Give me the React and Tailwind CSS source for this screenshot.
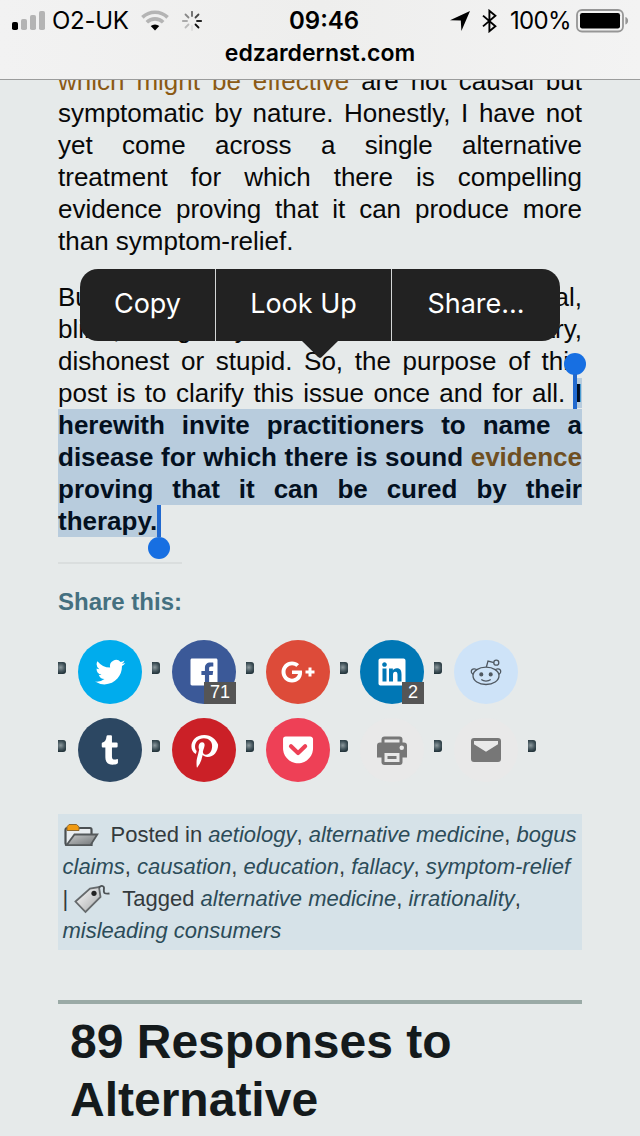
const shareRows = [
  [
    { name: "twitter", color: "bg-[#00aced]" },
    { name: "facebook", color: "bg-[#3b5998]", count: 71 },
    { name: "google", color: "bg-[#dd4b39]" },
    { name: "linkedin", color: "bg-[#0077b5]", count: 2 },
    { name: "reddit", color: "bg-[#cee3f8]" },
  ],
  [
    { name: "tumblr", color: "bg-[#2c4762]" },
    { name: "pinterest", color: "bg-[#cb2027]" },
    { name: "pocket", color: "bg-[#ee4056]" },
    { name: "print", color: "bg-[#e9e9e9]", grey: true },
    { name: "mail", color: "bg-[#e9e9e9]", grey: true },
  ],
];

const paths = {
  twitter:
    "M22.23 5.924a8.212 8.212 0 01-2.357.646 4.115 4.115 0 001.804-2.27 8.221 8.221 0 01-2.606.996 4.103 4.103 0 00-6.991 3.742 11.647 11.647 0 01-8.457-4.287 4.087 4.087 0 00-.556 2.063 4.1 4.1 0 001.825 3.415 4.09 4.09 0 01-1.859-.513v.052a4.104 4.104 0 003.292 4.023 4.099 4.099 0 01-1.853.07 4.11 4.11 0 003.833 2.85A8.236 8.236 0 012 18.411a11.616 11.616 0 006.29 1.843c7.547 0 11.675-6.252 11.675-11.675 0-.178-.004-.355-.012-.531a8.298 8.298 0 002.277-2.124z",
  facebook:
    "M20.007 3H3.993C3.445 3 3 3.445 3 3.993v16.013c0 .55.445.994.993.994h8.62v-6.97H10.27V11.31h2.346V9.31c0-2.325 1.42-3.59 3.494-3.59.993 0 1.847.073 2.096.106v2.43h-1.438c-1.128 0-1.346.537-1.346 1.324v1.734h2.69l-.35 2.717h-2.34V21h4.587c.548 0 .993-.445.993-.993V3.993c0-.548-.445-.993-.993-.993z",
  google:
    "M8 11h6.61c.06.35.11.7.11 1.16 0 4-2.68 6.84-6.72 6.84-3.87 0-7-3.13-7-7s3.13-7 7-7c1.89 0 3.47.69 4.69 1.83l-1.9 1.83C10.27 8.16 9.36 7.58 8 7.58c-2.39 0-4.34 1.98-4.34 4.42S5.61 16.42 8 16.42c2.77 0 3.81-1.99 3.97-3.02H8V11zm15 0h-2V9h-2v2h-2v2h2v2h2v-2h2z",
  linkedin:
    "M19.7 3H4.3C3.582 3 3 3.582 3 4.3v15.4c0 .718.582 1.3 1.3 1.3h15.4c.718 0 1.3-.582 1.3-1.3V4.3c0-.718-.582-1.3-1.3-1.3zM8.34 18.338H5.666v-8.59H8.34v8.59zM7.003 8.574c-.857 0-1.55-.694-1.55-1.548 0-.855.692-1.548 1.55-1.548.854 0 1.547.694 1.547 1.548 0 .855-.692 1.548-1.546 1.548zm11.335 9.764h-2.67V14.16c0-.996-.017-2.277-1.387-2.277-1.39 0-1.6 1.086-1.6 2.206v4.248h-2.668v-8.59h2.56v1.174h.036c.357-.675 1.228-1.387 2.527-1.387 2.703 0 3.203 1.78 3.203 4.092v4.71z",
  tumblr:
    "M16.7 18c-.4.3-.9.4-1.4.4-1.4 0-2-.6-2-1.900V10.300h3q.8 0 .8-.8V7.700q0-.7-.8-.7h-3V2.800q0-.7-.7-.7h-2.100q-.7 0-.8.700c-.3 2.500-.9 3.700-2.600 4.200-.4.100-.6.300-.6.700v1.800q0 .8.7.8h1.700v6.600c0 3.200 1.700 4.900 4.900 4.900 1.100 0 2.200-.2 3-.6.3-.2.5-.4.5-.7V18.500q0-.7-.6-.5z",
  pinterest:
    "M12.29 2C6.617 2 3.607 5.648 3.607 9.622c0 1.846 1.025 4.146 2.665 4.878.25.11.38.063.44-.17.044-.174.266-1.028.365-1.427.032-.128.017-.237-.09-.362-.543-.634-.974-1.79-.974-2.873 0-2.777 2.19-5.466 5.922-5.466 3.22 0 5.476 2.113 5.476 5.133 0 3.413-1.797 5.777-4.138 5.777-1.292 0-2.26-1.026-1.95-2.285.372-1.5 1.09-3.117 1.09-4.2 0-.968-.54-1.775-1.658-1.775-1.316 0-2.37 1.307-2.37 3.057 0 1.115.394 1.87.394 1.87s-1.302 5.304-1.54 6.29c-.47 1.954-.07 5.12-.037 5.44.02.19.262.24.37.09.153-.2 2.14-3.02 2.697-5.04.158-.57.904-3.4.904-3.4.447.82 1.75 1.54 3.14 1.54 4.13 0 7.09-3.63 7.09-8.14C20.39 5.21 16.7 2 12.29 2z",
  pocket:
    "M21.927 4.194A1.82 1.82 0 0020.222 3H3.839a1.823 1.823 0 00-1.813 1.814v6.035l.069 1.2c.29 2.73 1.707 5.115 3.899 6.778l.119.089.025.018a9.897 9.897 0 003.91 1.727 10.06 10.06 0 004.049-.014.255.255 0 00.064-.023 9.906 9.906 0 003.753-1.691l.025-.018.119-.089c2.192-1.664 3.609-4.049 3.898-6.778l.069-1.2V4.814a1.792 1.792 0 00-.098-.62zm-4.235 6.287l-4.704 4.512a1.371 1.371 0 01-1.898 0l-4.705-4.512a1.371 1.371 0 111.898-1.979l3.756 3.601 3.755-3.601a1.372 1.372 0 011.957.021 1.372 1.372 0 01-.059 1.958z",
  print:
    "M9 16h6v2H9v-2zm13 1h-3v3a2 2 0 01-2 2H7a2 2 0 01-2-2v-3H2V9a2 2 0 012-2h1V5a2 2 0 012-2h10a2 2 0 012 2v2h1a2 2 0 012 2v8zM7 7h10V5H7v2zm10 7H7v6h10v-6zm3-3.5a1.5 1.5 0 10-3.001.001A1.5 1.5 0 0020 10.5z",
  mail:
    "M20 4H4a2 2 0 00-2 2v12a2 2 0 002 2h16a2 2 0 002-2V6a2 2 0 00-2-2zm0 4.236l-8 4.882-8-4.882V6h16v2.236z",
};

function RedditIcon() {
  return (
    <svg viewBox="0 0 36 36" className="size-9" fill="none" stroke="#4f5861" strokeWidth="1.3">
      <ellipse cx="18" cy="21.8" rx="13" ry="8.7" />
      <path d="M5.200 20.400C2.200 18.800 2.800 15 6 14.800c1.500-.1 2.400.4 3.200 1.400M30.800 20.400c3-1.600 2.400-5.400-.8-5.600-1.500-.1-2.400.4-3.200 1.400M18.400 13l1.600-6 6 1.600" />
      <circle cx="28.3" cy="8.7" r="2.5" />
      <path d="M13.3 25.6c2.6 1.9 6.8 1.9 9.4 0" />
      <circle cx="13.3" cy="20.4" r="1.4" fill="#4f5861" />
      <circle cx="22.7" cy="20.4" r="1.4" fill="#4f5861" />
    </svg>
  );
}

function Bullet() {
  return (
    <span className="mt-[22px] h-3 w-2 shrink-0 rounded-r-[3px] bg-[radial-gradient(circle_at_35%_45%,#8d9a9e_0%,#46575e_45%,#14262d_90%)]" />
  );
}

function ShareButton({ name, color, count, grey }) {
  return (
    <li className="flex h-16 w-[94px] gap-3">
      <Bullet />
      <a className={`relative flex size-16 shrink-0 items-center justify-center rounded-full ${color}`}>
        {name === "reddit" ? (
          <RedditIcon />
        ) : (
          <svg viewBox="0 0 24 24" className={grey ? "size-9 fill-[#777777]" : "size-9 fill-white"}>
            <path d={paths[name]} />
          </svg>
        )}
        {count && (
          <span className="absolute right-0 bottom-0 h-[22px] bg-[#555555] px-1.5 text-[18px] leading-[21px] text-white">
            {count}
          </span>
        )}
      </a>
    </li>
  );
}

function Line({ children, className = "" }) {
  return (
    <span className={`block h-8 whitespace-nowrap text-justify [text-align-last:justify] ${className}`}>
      {children}
    </span>
  );
}

function StatusBar() {
  return (
    <header className="h-20 shrink-0 border-b border-[#9b9c9c] bg-linear-to-r from-[#f2f2f2] via-[#eeeeed] to-[#f3f3f3] font-[Inter,sans-serif] text-black">
      <div className="flex h-[42px] items-center justify-between pr-[11px] pl-3">
        <div className="flex w-[277px] items-center">
          <svg width="34" height="22" viewBox="0 0 34 22">
            <rect x="0" y="12" width="6" height="8" rx="1.8" />
            <rect x="9" y="9" width="6" height="11" rx="1.8" fill="#b4b4b4" />
            <rect x="18" y="5" width="6" height="15" rx="1.8" fill="#b4b4b4" />
            <rect x="27" y="1" width="6" height="19" rx="1.8" fill="#b4b4b4" />
          </svg>
          <span className="ml-[6px] w-[77px] text-[24px] tracking-[-0.3px] whitespace-nowrap">O2-UK</span>
          <svg className="ml-3" width="28" height="22" viewBox="0 0 28 22" fill="none" strokeWidth="3.6">
            <path d="M1.4 7.4a18 18 0 0 1 25.2 0" stroke="#b4b4b4" />
            <path d="M5.8 12.2a11.8 11.8 0 0 1 16.4 0" stroke="#b4b4b4" />
            <path d="M14 20.500l-4.300-4.400a6.300 6.300 0 0 1 8.600 0z" fill="#000" />
          </svg>
          <svg className="ml-[13px] shrink-0" width="20" height="20" viewBox="-10 -10 20 20" strokeWidth="1.8" strokeLinecap="round">
            <path d="M0-5v-4.2" stroke="#666" />
            <path d="M3.5-3.5l3-3" stroke="#444" />
            <path d="M5 0h4.2" stroke="#222" />
            <path d="M3.5 3.5l3 3" stroke="#111" />
            <path d="M0 5v4.2" stroke="#ddd" />
            <path d="M-3.5 3.5l-3 3" stroke="#bbb" />
            <path d="M-5 0h-4.2" stroke="#aaa" />
            <path d="M-3.5-3.5l-3-3" stroke="#888" />
          </svg>
        </div>
        <div className="flex-1 text-[24px] font-semibold">09:46</div>
        <div className="flex items-center">
          <svg width="20" height="20" viewBox="0 0 20 20">
            <path d="M0 9.2L20 0l-8.6 20-.6-10.4z" />
          </svg>
          <svg className="ml-3" width="15" height="24" viewBox="0 0 15 24" fill="none" stroke="#000" strokeWidth="1.9">
            <path d="M1 6.6l12.4 10.6-6 5V1.8l6 5L1 17.4" />
          </svg>
          <span className="ml-[13px] w-[61px] text-[24px] tracking-[-0.7px]">100%</span>
          <svg className="ml-[5px] shrink-0" width="53" height="24" viewBox="0 0 53 24">
            <rect x="1" y="1" width="46" height="21.5" rx="5" fill="none" stroke="#969696" strokeWidth="1.8" />
            <rect x="4" y="4" width="40" height="15.5" rx="2.2" />
            <path d="M49.4 8c3.600 1.200 3.600 6.400 0 7.600z" fill="#969696" />
          </svg>
        </div>
      </div>
      <div className="-mt-[3px] text-center text-[23px] leading-[28px] font-semibold">edzardernst.com</div>
    </header>
  );
}

function SelectionMenu() {
  return (
    <div className="absolute top-[269px] left-20 h-[72px] w-[480px] font-[Inter,sans-serif] text-[27px] text-white">
      <div className="flex h-full overflow-hidden rounded-[18px] bg-[#222222] leading-[70px]">
        <div className="w-[136px] border-r border-[#d5d7d7] text-center">Copy</div>
        <div className="w-44 border-r border-[#d5d7d7] text-center">Look Up</div>
        <div className="flex-1 text-center">Share...</div>
      </div>
      <svg className="absolute top-[71px] left-[221px]" width="38" height="19" viewBox="0 0 38 19">
        <path d="M0 0h38L20.500 17.300q-1.500 1.400-3 0z" fill="#222222" />
      </svg>
    </div>
  );
}

function FolderIcon() {
  return (
    <svg className="h-6 w-9" viewBox="0 0 36 24">
      <defs>
        <linearGradient id="folder" x1="0" y1="0" x2="1" y2="1">
          <stop offset="0" stopColor="#c9cbcc" />
          <stop offset="1" stopColor="#707476" />
        </linearGradient>
      </defs>
      <path d="M2.500 7q0-2 2-2H27q1.500 0 1.500 1.500V22H4.500q-2 0-2-2z" fill="#e9edf0" stroke="#4b5053" strokeWidth="2.200" />
      <path d="M4 7.500V3.800L6 1.500h7.500l2.500 2.300v3.700z" fill="#f09a12" stroke="#8f6a30" strokeWidth="1" />
      <path d="M3.500 22.200L11.500 11.500h22.800L27.500 22.200z" fill="url(#folder)" stroke="#54595b" strokeWidth="1.800" />
    </svg>
  );
}

function TagIcon() {
  return (
    <svg className="h-[30px] w-9" viewBox="0 0 36 30">
      <defs>
        <linearGradient id="tag" x1="0" y1="0" x2="1" y2="1">
          <stop offset="0" stopColor="#fff" />
          <stop offset="1" stopColor="#a5a7a8" />
        </linearGradient>
      </defs>
      <path d="M1.500 17.500L16 4.500l9-1.500L26.500 13 11.500 28z" fill="url(#tag)" stroke="#666a6c" strokeWidth="1.800" />
      <circle cx="20" cy="9.300" r="2.600" fill="#222" />
      <path d="M25 3.500q3-3 4.800-.5c.8 2-1 4.500.7 6q1.500 1 5 .500" fill="none" stroke="#4d5255" strokeWidth="1.900" />
    </svg>
  );
}

function Tag({ children }) {
  return <em className="text-[#2c4c59]">{children}</em>;
}

export default function App() {
  return (
    <div className="relative flex h-[1136px] w-[640px] flex-col overflow-hidden bg-[#e6eaea] font-['Liberation_Sans',Arial,sans-serif]">
      <StatusBar />

      <main className="flex-1 overflow-hidden px-[58px]">
        <div className="-mt-[15px] text-[26px] leading-8 text-[#080808]">
          <p>
            <Line>
              <span className="text-[#8b5a14]">which might be effective</span> are not causal but
            </Line>
            <Line>symptomatic by nature. Honestly, I have not</Line>
            <Line>yet come across a single alternative</Line>
            <Line>treatment for which there is compelling</Line>
            <Line>evidence proving that it can produce more</Line>
            <span className="block h-8">than symptom-relief.</span>
          </p>
          <p className="mt-6">
            <Line>But partial,</Line>
            <span className="flex h-8">
              <span>blind,</span>
              <span className="ml-[15px]">imaginary</span>
              <span className="ml-auto">contrary,</span>
            </span>
            <Line>dishonest or stupid. So, the purpose of this</Line>
            <Line>
              post is to clarify this issue once and for all.{" "}
              <strong className="bg-[#b8ccdd] text-[#03101f]">I</strong>
            </Line>
            <strong className="block text-[#03101f]">
              <Line className="bg-[#b8ccdd]">herewith invite practitioners to name a</Line>
              <Line className="bg-[#b8ccdd]">
                disease for which there is sound <span className="text-[#6f4f22]">evidence</span>
              </Line>
              <Line className="bg-[#b8ccdd]">proving that it can be cured by their</Line>
              <span className="block h-8 w-[101px] bg-[#b8ccdd]">therapy.</span>
            </strong>
          </p>
        </div>

        {/* Share buttons */}
        <section className="mt-[25px]">
          <div className="h-0.5 w-[124px] bg-[#dadede]" />
          <h3 className="mt-6 text-[24px] leading-7 font-bold text-[#447080]">Share this:</h3>
          <div className="mt-6 flex flex-col gap-3.5">
            {shareRows.map((row, i) => (
              <ul key={i} className="flex">
                {row.map((item) => (
                  <ShareButton key={item.name} {...item} />
                ))}
                {i === 1 && (
                  <li className="flex">
                    <Bullet />
                  </li>
                )}
              </ul>
            ))}
          </div>
        </section>

        {/* Post meta */}
        <div className="mt-8 h-[136px] bg-[#d6e2e8] px-[4.5px] pt-[5px] text-[22px] leading-8 whitespace-nowrap text-[#333a3d]">
          <div className="flex h-8 items-center">
            <FolderIcon />
            <span className="ml-3">
              Posted in <Tag>aetiology</Tag>, <Tag>alternative medicine</Tag>, <Tag>bogus</Tag>
            </span>
          </div>
          <div className="h-8">
            <Tag>claims</Tag>, <Tag>causation</Tag>, <Tag>education</Tag>, <Tag>fallacy</Tag>, <Tag>symptom-relief</Tag>
          </div>
          <div className="flex h-8 items-center">
            <span>|</span>
            <span className="ml-1.5 flex">
              <TagIcon />
            </span>
            <span className="ml-3">
              Tagged <Tag>alternative medicine</Tag>, <Tag>irrationality</Tag>,
            </span>
          </div>
          <div className="h-8">
            <Tag>misleading consumers</Tag>
          </div>
        </div>

        <h2 className="mt-[50px] border-t-4 border-[#9aaaa6] pt-[9px] pl-3 text-[48px] leading-[58px] font-bold text-[#141a1c]">
          89 Responses to
          <br />
          Alternative
        </h2>
      </main>

      {/* Selection handles */}
      <div className="absolute top-[353px] left-[564px] flex w-[22px] flex-col items-center">
        <span className="size-[22px] rounded-full bg-[#176fe2]" />
        <span className="-mt-px h-[35px] w-1 bg-[#2169cf]" />
      </div>
      <div className="absolute top-[505px] left-[148px] flex w-[22px] flex-col items-center">
        <span className="h-8 w-1 bg-[#2169cf]" />
        <span className="size-[22px] rounded-full bg-[#176fe2]" />
      </div>

      <SelectionMenu />
    </div>
  );
}
